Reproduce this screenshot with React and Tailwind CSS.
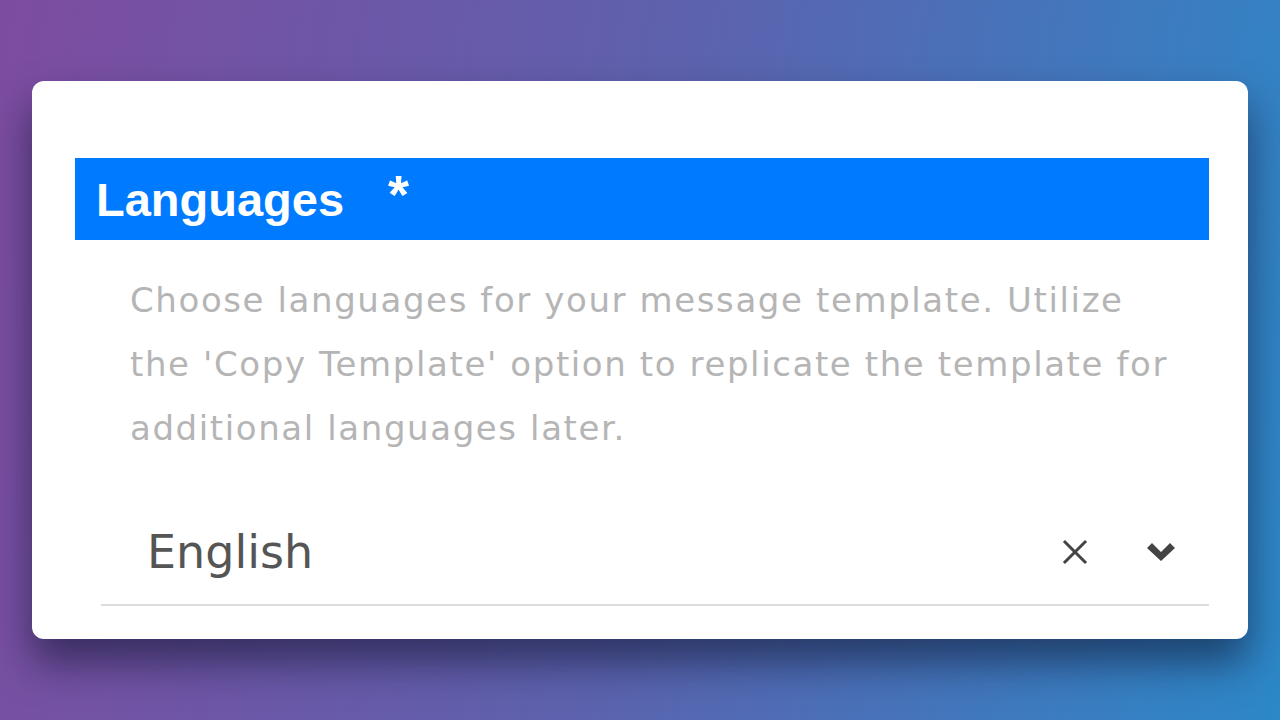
export default function App() {
  return (
    <div className="w-[1280px] h-[720px] overflow-hidden bg-[linear-gradient(100deg,#7d4ca0_0%,#5d62ae_50%,#2c88c8_100%)] pt-[81px] px-[32px]">
      <div className="bg-white rounded-[12px] h-[558px] shadow-[0_24px_40px_rgba(10,15,40,0.55)] pt-[77px] pl-[43px] pr-[39px]">
        <div className="h-[82px] bg-[#007bff] flex items-center pl-[21px] text-white font-bold font-['Liberation_Sans',Arial,sans-serif]">
          <span className="text-[47px] leading-none">Languages</span>
          <span className="text-[54px] leading-none ml-[44px] -mt-[10px]">*</span>
        </div>
        <p className="pl-[55px] pr-[40px] mt-[28px] text-[#b5b5b5] text-[34px] tracking-[1.6px] leading-[64px] font-['DejaVu_Sans',sans-serif]">
          Choose languages for your message template. Utilize the 'Copy Template' option to replicate the template for additional languages later.
        </p>
        <div className="ml-[26px] mt-[40px] border-b-2 border-[#dcdcdc] h-[106px] flex items-center pl-[46px] pr-[32px]">
          <span className="flex-1 text-[46px] text-[#555] font-['DejaVu_Sans',sans-serif]">English</span>
          <svg width="30" height="30" viewBox="0 0 24 24" fill="none" stroke="#444" strokeWidth="2.4" strokeLinecap="square">
            <path d="M4 4L20 20M20 4L4 20" />
          </svg>
          <svg width="32" height="24" viewBox="0 0 32 24" className="ml-[55px]" fill="#444">
            <path d="M2 8 L7 3 L16 12 L25 3 L30 8 L16 21 Z" />
          </svg>
        </div>
      </div>
    </div>
  );
}
